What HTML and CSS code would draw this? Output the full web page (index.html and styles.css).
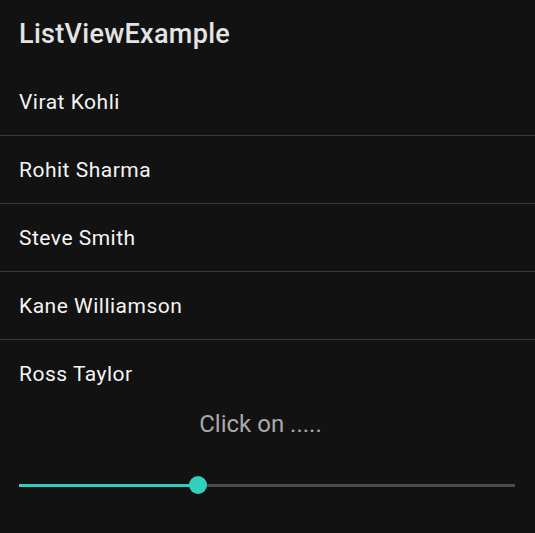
FILE: index.html
```html
<!DOCTYPE html>
<html>
<head>
<meta charset="utf-8">
<link rel="stylesheet" href="styles.css">
</head>
<body>
<div class="app">
  <header class="appbar">ListViewExample</header>
  <ul class="list">
    <li class="item">Virat Kohli</li>
    <li class="item">Rohit Sharma</li>
    <li class="item">Steve Smith</li>
    <li class="item">Kane Williamson</li>
    <li class="item last">Ross Taylor</li>
  </ul>
  <div class="status">Click on .....</div>
  <div class="slider">
    <div class="track">
      <div class="active" style="width: 36%"></div>
      <div class="thumb" style="left: 36%"></div>
    </div>
  </div>
</div>
</body>
</html>
```
FILE: styles.css
```css
html, body {
  margin: 0;
  padding: 0;
  background: #121212;
}
.app {
  width: 535px;
  height: 533px;
  background: #121212;
  font-family: Roboto, "Noto Sans", sans-serif;
  overflow: hidden;
}
.appbar {
  height: 68px;
  box-sizing: border-box;
  padding-left: 19px;
  display: flex;
  align-items: center;
  font-size: 27px;
  font-weight: 500;
  letter-spacing: 0.3px;
  color: #e4e4e4;
}
.list {
  list-style: none;
  margin: 0;
  padding: 0;
}
.item {
  height: 67px;
  box-sizing: content-box;
  padding-left: 19px;
  display: flex;
  align-items: center;
  font-size: 21px;
  letter-spacing: 0.5px;
  color: #f4f4f4;
  border-bottom: 1px solid #393939;
}
.item.last {
  border-bottom: none;
}
.status {
  text-align: center;
  font-size: 24px;
  color: #a9a9a9;
  padding-right: 14px;
  height: 34px;
  line-height: 34px;
}
.slider {
  padding: 0 20px 0 19px;
  margin-top: 34px;
  height: 20px;
  display: flex;
  align-items: center;
}
.track {
  position: relative;
  flex: 1;
  height: 3px;
  background: #4a4a4a;
}
.active {
  height: 100%;
  background: #2fd0bc;
}
.thumb {
  position: absolute;
  top: 50%;
  width: 18px;
  height: 18px;
  margin-left: -9px;
  margin-top: -9px;
  border-radius: 50%;
  background: #2fd0bc;
}
```
